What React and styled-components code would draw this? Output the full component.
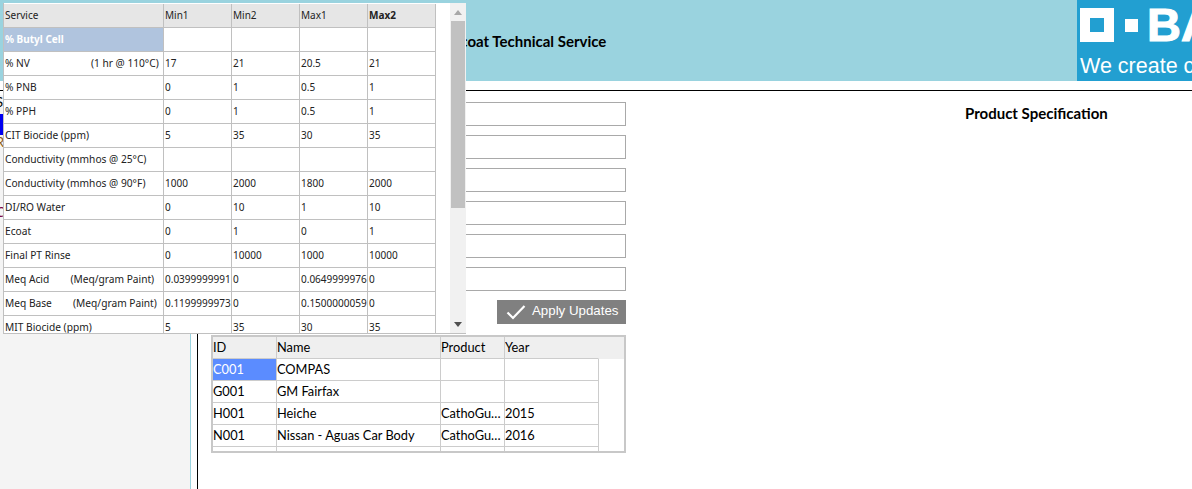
import React from 'react';
import styled, { createGlobalStyle } from 'styled-components';

const GlobalStyle = createGlobalStyle`
  html, body { margin: 0; padding: 0; height: 100%; overflow: hidden; background: #fff; }
  #root { height: 100%; }
`;

const Page = styled.div`
  position: relative;
  width: 1192px;
  height: 489px;
  overflow: hidden;
  font-family: "Lato", sans-serif;
  color: #000;
`;

const Header = styled.header`
  display: flex;
  justify-content: space-between;
  height: 81px;
  background: #9ad3df;
`;

const Title = styled.h1`
  margin: 0;
  padding: 32px 0 0 452px;
  font-size: 15px;
  line-height: 18px;
  font-weight: 700;
`;

const Logo = styled.div`
  width: 115px;
  padding: 8px 0 0 3px;
  box-sizing: border-box;
  background: #229fd1;
  color: #fff;
  font-family: "Liberation Sans", sans-serif;
  overflow: hidden;
  white-space: nowrap;
`;

const LogoMark = styled.div`
  display: flex;
  align-items: center;
  gap: 11px;
  height: 34px;
`;

const LogoName = styled.span`
  margin-left: -2px;
  font-size: 47px;
  font-weight: 700;
  line-height: 34px;
  -webkit-text-stroke: 1.2px #fff;
`;

const LogoSlogan = styled.div`
  margin-top: 11px;
  font-size: 21.5px;
  line-height: 26px;
`;

const Rule = styled.div`
  height: 1px;
  margin-top: 9px;
  background: #000;
`;

const Body = styled.div`
  display: flex;
  height: 398px;
`;

const Sidebar = styled.nav`
  width: 190px;
  background: #f4f4f4;
  border-right: 1px solid #9ad3df;
  font-size: 13px;
  line-height: 14px;
  overflow: hidden;
`;

const SideItem = styled.div`
  height: ${p => p.$h}px;
  color: ${p => p.$color || '#000'};
  background: ${p => p.$bg || 'transparent'};
  white-space: nowrap;
  margin-left: -4px;
`;

const Main = styled.main`
  display: flex;
  flex: 1;
  margin-left: 6px;
  border-left: 1px solid #000;
`;

const FormColumn = styled.div`
  display: flex;
  flex-direction: column;
  width: 415px;
  margin-left: 13px;
  padding-top: 11px;
`;

const Field = styled.input`
  box-sizing: border-box;
  display: block;
  width: 100%;
  height: 24px;
  margin: 0 0 9px;
  border: 1px solid #a9a9a9;
  background: #fff;
`;

const ApplyButton = styled.button`
  display: flex;
  align-items: center;
  align-self: flex-end;
  gap: 6px;
  width: 129px;
  height: 24px;
  padding: 0 0 4px 9px;
  border: 0;
  background: #808080;
  color: #fff;
  font-family: "Liberation Sans", sans-serif;
  font-size: 13.3px;
`;

const CheckIcon = styled.svg`
  margin-top: 4px;
`;

const Customers = styled.div`
  box-sizing: border-box;
  width: 415px;
  height: 118px;
  margin-top: 11px;
  border: 2px solid #c8c8c8;
  overflow: hidden;
  font-size: 12.8px;
`;

const CustomerRow = styled.div`
  display: grid;
  grid-template-columns: 64px 164px 64px 94px 1fr;
  height: 22px;
`;

const CustomerCell = styled.div`
  box-sizing: border-box;
  height: 22px;
  line-height: 20px;
  border-right: 1px solid ${p => (p.$openEnd ? 'transparent' : '#ccc')};
  border-bottom: 1px solid #ccc;
  white-space: nowrap;
  overflow: hidden;
  text-overflow: ellipsis;
  color: ${p => (p.$selected ? '#fff' : 'inherit')};
  background: ${p => (p.$selected ? '#5b8cff' : p.$head ? '#efefef' : 'transparent')};
`;

const CustomerFill = styled.div`
  background: ${p => (p.$head ? '#efefef' : '#fff')};
`;

const SpecColumn = styled.section`
  flex: 1;
  padding: 12px 0 0 339px;
`;

const SpecTitle = styled.h2`
  margin: 0;
  font-size: 15px;
  line-height: 20px;
  font-weight: 700;
  white-space: nowrap;
`;

/* popup grid sits on top of the page */
const Popup = styled.div`
  position: absolute;
  left: 3px;
  top: 3px;
  display: flex;
  width: 463px;
  height: 330px;
  background: #fff;
  border-bottom: 1px solid #c0c0c0;
  overflow: hidden;
  font-family: "Noto Sans", "Open Sans", sans-serif;
  font-size: 10px;
`;

const GridTable = styled.div`
  width: 433px;
  padding-top: 1px;
  border-left: 1px solid #c0c0c0;
  box-sizing: border-box;
  flex: none;
`;

const GridRow = styled.div`
  display: grid;
  grid-template-columns: 160px 68px 68px 68px 68px;
  height: 24px;
`;

const GridCell = styled.div`
  box-sizing: border-box;
  height: 24px;
  padding-left: 1px;
  line-height: 23px;
  font-size: ${p => (p.$label ? '10.2px' : '10px')};
  border-right: 1px solid #c0c0c0;
  border-bottom: 1px solid #c0c0c0;
  white-space: pre;
  overflow: hidden;
  color: ${p => (p.$band ? '#fff' : '#222')};
  font-weight: ${p => (p.$bold || p.$band ? 700 : 400)};
  background: ${p => (p.$band ? '#b0c4de' : p.$head ? '#e6e6e6' : '#fff')};
`;

const ScrollGutter = styled.div`
  flex: 1;
`;

const ScrollBar = styled.div`
  display: flex;
  flex-direction: column;
  align-items: center;
  width: 16px;
  background: #f1f1f1;
`;

const ScrollArrow = styled.div`
  display: flex;
  align-items: center;
  justify-content: center;
  height: 18px;
  flex: none;
`;

const ScrollThumb = styled.div`
  width: 14px;
  height: 187px;
  background: #c1c1c1;
`;

const ScrollTrack = styled.div`
  flex: 1;
`;

const specs = [
  ['% NV                       (1 hr @ 110°C)', '17', '21', '20.5', '21'],
  ['% PNB', '0', '1', '0.5', '1'],
  ['% PPH', '0', '1', '0.5', '1'],
  ['CIT Biocide (ppm)', '5', '35', '30', '35'],
  ['Conductivity (mmhos @ 25°C)', '', '', '', ''],
  ['Conductivity (mmhos @ 90°F)', '1000', '2000', '1800', '2000'],
  ['DI/RO Water', '0', '10', '1', '10'],
  ['Ecoat', '0', '1', '0', '1'],
  ['Final PT Rinse', '0', '10000', '1000', '10000'],
  ['Meq Acid        (Meq/gram Paint)', '0.0399999991', '0', '0.0649999976', '0'],
  ['Meq Base        (Meq/gram Paint)', '0.1199999973', '0', '0.1500000059', '0'],
  ['MIT Biocide (ppm)', '5', '35', '30', '35'],
];

const customers = [
  ['C001', 'COMPAS', '', ''],
  ['G001', 'GM Fairfax', '', ''],
  ['H001', 'Heiche', 'CathoGuard 800', '2015'],
  ['N001', 'Nissan - Aguas Car Body', 'CathoGuard 800', '2016'],
  ['', '', '', ''],
];

const Arrow = ({ up }) => (
  <svg width="8" height="5" viewBox="0 0 8 5">
    <polygon points={up ? '4,0 8,5 0,5' : '0,0 8,0 4,5'} fill={up ? '#a8a8a8' : '#505050'} />
  </svg>
);

const App = () => {
  return (
    <Page>
      <GlobalStyle />
      <Header>
        <Title>Ecoat Technical Service</Title>
        <Logo>
          <LogoMark>
            <svg width="34" height="34" viewBox="0 0 34 34" style={{ flex: 'none' }}>
              <path d="M0 0h34v34H0z M10 10v14h14V10z" fill="#fff" fillRule="evenodd" />
            </svg>
            <svg width="13" height="13" viewBox="0 0 13 13" style={{ flex: 'none' }}>
              <rect width="13" height="13" fill="#fff" />
            </svg>
            <LogoName>BASF</LogoName>
          </LogoMark>
          <LogoSlogan>We create chemistry</LogoSlogan>
        </Logo>
      </Header>
      <Rule />
      <Body>
        <Sidebar>
          <SideItem $h={4} $bg="#fff" />
          <SideItem $h={19}>Service</SideItem>
          <SideItem $h={21} $bg="#0000f0" />
          <SideItem $h={70} $color="#8a5a10">Reports</SideItem>
          <SideItem $h={19} $color="#7a0040">Customer</SideItem>
        </Sidebar>
        <Main>
          <FormColumn>
            <Field />
            <Field />
            <Field />
            <Field />
            <Field />
            <Field />
            <ApplyButton type="button">
              <CheckIcon width="20" height="16" viewBox="0 0 20 16">
                <polyline points="1.5,8.5 7,14 18.5,2" fill="none" stroke="#fff" strokeWidth="2.2" />
              </CheckIcon>
              Apply Updates
            </ApplyButton>
            <Customers>
              <CustomerRow>
                <CustomerCell $head>ID</CustomerCell>
                <CustomerCell $head>Name</CustomerCell>
                <CustomerCell $head>Product</CustomerCell>
                <CustomerCell $head $openEnd>Year</CustomerCell>
                <CustomerFill $head />
              </CustomerRow>
              {customers.map((c, i) => (
                <CustomerRow key={i}>
                  <CustomerCell $selected={i === 0}>{c[0]}</CustomerCell>
                  <CustomerCell>{c[1]}</CustomerCell>
                  <CustomerCell>{c[2]}</CustomerCell>
                  <CustomerCell>{c[3]}</CustomerCell>
                  <CustomerFill />
                </CustomerRow>
              ))}
            </Customers>
          </FormColumn>
          <SpecColumn>
            <SpecTitle>Product Specification</SpecTitle>
          </SpecColumn>
        </Main>
      </Body>
      <Popup>
        <GridTable>
          <GridRow>
            <GridCell $head>Service</GridCell>
            <GridCell $head>Min1</GridCell>
            <GridCell $head>Min2</GridCell>
            <GridCell $head>Max1</GridCell>
            <GridCell $head $bold>Max2</GridCell>
          </GridRow>
          <GridRow>
            <GridCell $band>% Butyl Cell</GridCell>
            <GridCell />
            <GridCell />
            <GridCell />
            <GridCell />
          </GridRow>
          {specs.map((row, i) => (
            <GridRow key={i}>
              {row.map((v, j) => (
                <GridCell key={j} $label={j === 0}>{v}</GridCell>
              ))}
            </GridRow>
          ))}
        </GridTable>
        <ScrollGutter />
        <ScrollBar>
          <ScrollArrow><Arrow up /></ScrollArrow>
          <ScrollThumb />
          <ScrollTrack />
          <ScrollArrow><Arrow /></ScrollArrow>
        </ScrollBar>
      </Popup>
    </Page>
  );
};

export default App;
